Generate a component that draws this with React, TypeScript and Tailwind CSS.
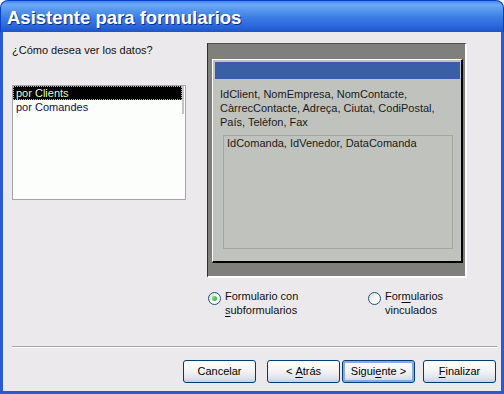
import React from "react";

const font = "font-['Liberation_Sans',Arial,sans-serif]";

const Radio = ({ checked }: { checked?: boolean }) => {
  return (
    <span className="flex h-[13px] w-[13px] shrink-0 items-center justify-center rounded-full border border-[#1c5180] bg-[linear-gradient(135deg,#dcdcd6,#ffffff_70%)]">
      {checked && (
        <span className="h-[5px] w-[5px] rounded-full bg-[radial-gradient(circle_at_35%_35%,#7ee07e,#21a121)]" />
      )}
    </span>
  );
};

const Button = ({
  children,
  active,
  className,
}: {
  children: React.ReactNode;
  active?: boolean;
  className?: string;
}) => {
  return (
    <div
      className={
        "flex h-[23px] w-[73px] items-center justify-center rounded-[3px] border border-[#003c74] bg-[linear-gradient(to_bottom,#ffffff,#f4f4f6_45%,#e2e4ec_80%,#c9cfdd)] text-[11px] text-black " +
        (active ? "shadow-[inset_0_0_0_2px_#89a9e6] " : "") +
        (className || "")
      }
    >
      {children}
    </div>
  );
};

const App = () => {
  return (
    <div className={"flex h-[394px] w-[504px] flex-col bg-white " + font}>
      {/* title bar */}
      <div className="flex h-[32px] shrink-0 items-center rounded-t-[8px] border-x border-t border-[#0a3fc8] bg-[linear-gradient(to_bottom,#3f86f0,#6eaaf6_12%,#5596ec_30%,#3a7be4_55%,#2c68dc_80%,#1e55c8)] px-[6px] pt-[4px]">
        <span className="text-[18.5px] font-bold leading-none text-white [text-shadow:1px_1px_#0f2f8a]">
          Asistente para formularios
        </span>
      </div>

      {/* body */}
      <div className="flex flex-1 flex-col border-x-[3px] border-b-[3px] border-[#2a5bd2] bg-[#ece9ec]">
        <div className="mt-[11px] flex">
          {/* left column */}
          <div className="ml-[9px] flex w-[174px] flex-col">
            <div className="mt-[1px] text-[11px] leading-[13px] text-[#101010]">
              ¿Cómo desea ver los datos?
            </div>
            <div className="mt-[28px] h-[115px] w-[174px] border border-[#a4a4a4] bg-[#fcfefc] p-[0px]">
              <div className="mr-[1px] border-r-[2px] border-[#c4c4c4]">
                <div className="h-[14px] border border-dotted border-[#b8b8b8] bg-black pl-[2px] text-[11px] leading-[12px] text-[#e4ffb8]">
                  por Clients
                </div>
                <div className="h-[14px] pl-[3px] text-[11px] leading-[14px] text-[#10104a]">
                  por Comandes
                </div>
              </div>
            </div>
          </div>

          {/* right column */}
          <div className="ml-[21px] flex w-[260px] flex-col">
            <div className="flex h-[235px] flex-col border-l border-t border-r-[2px] border-b-[2px] border-l-[#303030] border-t-[#505050] border-r-white border-b-white bg-[#7f807c] pb-[13px] pl-[4px] pr-[2px] pt-[15px]">
              <div className="flex flex-1 flex-col border-l border-t border-r-[2px] border-b-[2px] border-l-white border-t-white border-r-black border-b-black bg-[#c0c2bd]">
                <div className="ml-[2px] mr-[1px] mt-[2px] h-[17px] bg-[#3a5ea8]" />
                <div className="mt-[8px] pl-[7px] text-[11px] leading-[14px] text-[#1a1a1a]">
                  IdClient, NomEmpresa, NomContacte,
                  <br />
                  CàrrecContacte, Adreça, Ciutat, CodiPostal,
                  <br />
                  País, Telèfon, Fax
                </div>
                <div className="ml-[10px] mt-[6px] h-[114px] w-[230px] border border-[#a4a6a0] pl-[3px] pt-[1px] text-[11px] leading-[13px] text-[#1a1a1a]">
                  IdComanda, IdVenedor, DataComanda
                </div>
              </div>
            </div>

            {/* radios */}
            <div className="mt-[11px] flex text-[11px] leading-[14px] text-[#101010]">
              <div className="ml-[1px] flex w-[160px] gap-[4px]">
                <div className="mt-[3px]">
                  <Radio checked />
                </div>
                <div>
                  Formulario con
                  <br />
                  <span className="underline underline-offset-2">s</span>ubformularios
                </div>
              </div>
              <div className="flex gap-[4px]">
                <div className="mt-[3px]">
                  <Radio />
                </div>
                <div>
                  For<span className="underline underline-offset-2">m</span>ularios
                  <br />
                  vinculados
                </div>
              </div>
            </div>
          </div>
        </div>

        {/* separator */}
        <div className="ml-[9px] mr-[4px] mt-[29px] h-[2px] border-t border-b border-t-[#a6a5aa] border-b-white" />

        {/* buttons */}
        <div className="mt-[12px] flex pl-[180px]">
          <Button>Cancelar</Button>
          <Button className="ml-[11px]">
            &lt; <span className="ml-[3px] underline underline-offset-2">A</span>trás
          </Button>
          <Button active className="ml-[2px]">
            Sigui<span className="underline underline-offset-2">e</span>nte &gt;
          </Button>
          <Button className="ml-[8px]">
            <span className="underline underline-offset-2">F</span>inalizar
          </Button>
        </div>
      </div>
    </div>
  );
};

export default App;
